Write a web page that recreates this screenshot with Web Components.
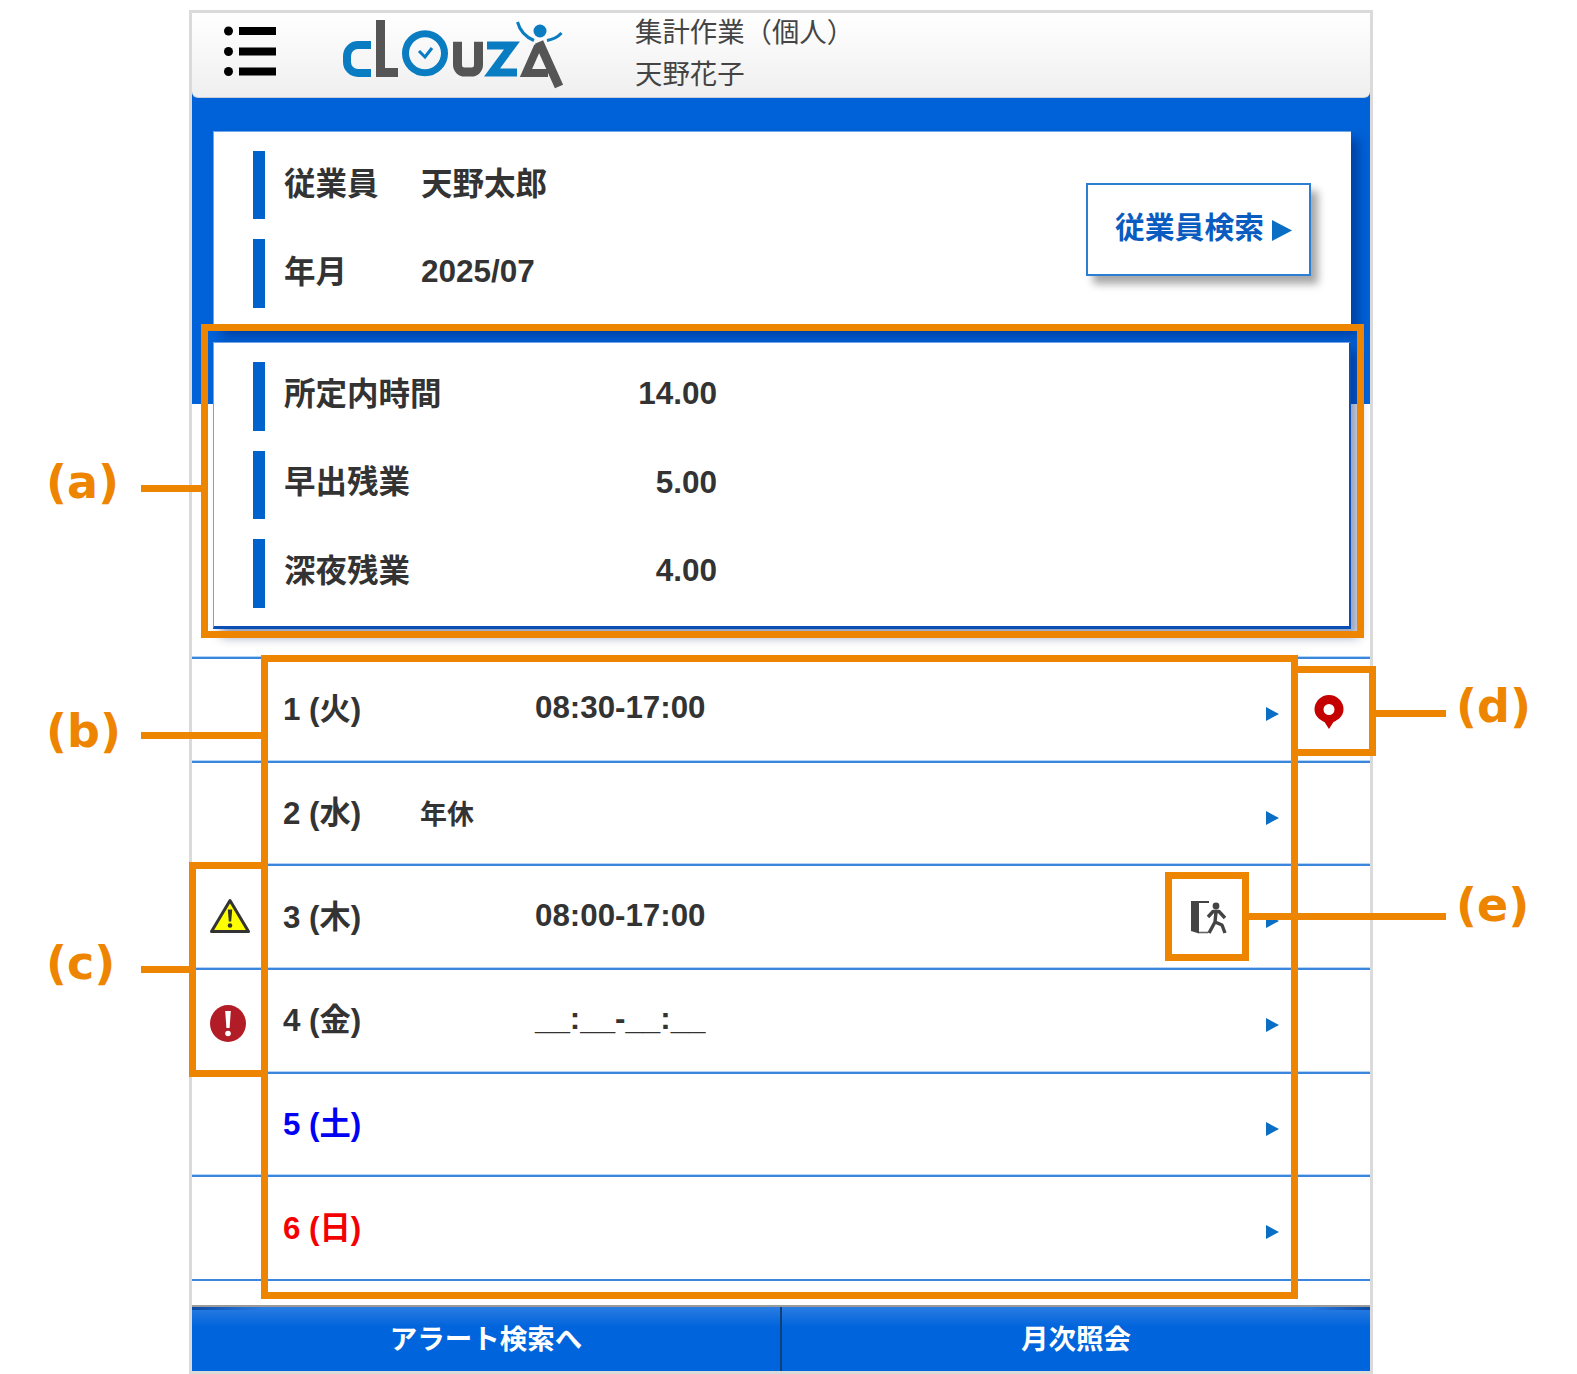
<!DOCTYPE html>
<html lang="ja">
<head>
<meta charset="utf-8">
<title>cLOUZA</title>
<style>
    html, body { margin: 0; background: #fff; }
    body { font-family: "Liberation Sans", "Noto Sans CJK JP", sans-serif; color: #333; }
</style>
</head>
<body>

<clz-page>
    <clz-frame>
        <clz-header slot="header" title-line="集計作業（個人）" name-line="天野花子"></clz-header>

        <clz-summary>
            <clz-card>
                <div>
                    <clz-field label="従業員" cjk>天野太郎</clz-field>
                    <clz-field label="年月">2025/07</clz-field>
                </div>
                <clz-search-button slot="aside">従業員検索</clz-search-button>
            </clz-card>
            <clz-card>
                <div>
                    <clz-field label="所定内時間" numeric>14.00</clz-field>
                    <clz-field label="早出残業" numeric>5.00</clz-field>
                    <clz-field label="深夜残業" numeric>4.00</clz-field>
                </div>
            </clz-card>
        </clz-summary>

        <clz-days>
            <clz-day>
                1 (火)
                <span slot="time">08:30-17:00</span>
                <clz-icon slot="pin" name="pin"></clz-icon>
            </clz-day>
            <clz-day>
                2 (水)
                <span slot="note">年休</span>
            </clz-day>
            <clz-day>
                3 (木)
                <clz-icon slot="alert" name="warn"></clz-icon>
                <span slot="time">08:00-17:00</span>
                <clz-icon slot="exit" name="exit"></clz-icon>
            </clz-day>
            <clz-day>
                4 (金)
                <clz-icon slot="alert" name="error"></clz-icon>
                <span slot="time">__:__-__:__</span>
            </clz-day>
            <clz-day tone="sat">5 (土)</clz-day>
            <clz-day tone="sun">6 (日)</clz-day>
        </clz-days>

        <clz-footer>
            <span>アラート検索へ</span>
            <span slot="right">月次照会</span>
        </clz-footer>
    </clz-frame>

    <!-- callouts lie over the screenshot -->
    <clz-mark slot="marks" style="left:201px;top:324px;width:1163px;height:314px"></clz-mark>
    <clz-mark slot="marks" style="left:261px;top:655px;width:1037px;height:644px"></clz-mark>
    <clz-mark slot="marks" style="left:189px;top:862px;width:79px;height:215px"></clz-mark>
    <clz-mark slot="marks" style="left:1291px;top:666px;width:85px;height:90px"></clz-mark>
    <clz-mark slot="marks" style="left:1165px;top:872px;width:84px;height:89px"></clz-mark>

    <clz-mark slot="marks" line style="left:141px;top:485px;width:60px"></clz-mark>
    <clz-mark slot="marks" line style="left:141px;top:732px;width:120px"></clz-mark>
    <clz-mark slot="marks" line style="left:141px;top:966px;width:48px"></clz-mark>
    <clz-mark slot="marks" line style="left:1376px;top:710px;width:70px"></clz-mark>
    <clz-mark slot="marks" line style="left:1249px;top:913px;width:197px"></clz-mark>

    <clz-mark slot="marks" label style="left:46px;top:456px">(a)</clz-mark>
    <clz-mark slot="marks" label style="left:46px;top:705px">(b)</clz-mark>
    <clz-mark slot="marks" label style="left:46px;top:937px">(c)</clz-mark>
    <clz-mark slot="marks" label style="left:1456px;top:680px">(d)</clz-mark>
    <clz-mark slot="marks" label style="left:1456px;top:879px">(e)</clz-mark>
</clz-page>

<script>
const FONT = `"Liberation Sans", "Noto Sans CJK JP", sans-serif`;
const BLUE = "#0062d8";

// every element below just fills its shadow root once
class ClzBase extends HTMLElement {
    constructor() {
        super();
        this.attachShadow({mode: 'open'});
    }

    connectedCallback() {
        this.render();
    }

    get styles() { return ""; }
    get template() { return "<slot></slot>"; }

    render() {
        this.shadowRoot.innerHTML = `<style>${this.styles}</style>${this.template}`;
    }
}

class ClzPage extends ClzBase {
    get styles() {
        return `
            :host {
                display: block;
                position: relative;
                width: 1577px;
                height: 1374px;
                padding: 10px 0 0 189px;
                box-sizing: border-box;
                overflow: hidden;
                font-family: ${FONT};
            }
        `;
    }
    get template() {
        return `<slot></slot><slot name="marks"></slot>`;
    }
}

class ClzFrame extends ClzBase {
    get styles() {
        return `
            :host {
                display: flex;
                flex-direction: column;
                width: 1184px;
                height: 1364px;
                box-sizing: border-box;
                border: solid #dadada;
                border-width: 3px;
                background: #fff;
            }
            .head { background: ${BLUE}; }
            .rest { flex: 1; display: flex; flex-direction: column; min-height: 0; }
        `;
    }
    get template() {
        return `
            <div class="head"><slot name="header"></slot></div>
            <div class="rest"><slot></slot></div>
        `;
    }
}

class ClzHeader extends ClzBase {
    get styles() {
        return `
            :host {
                display: flex;
                align-items: flex-start;
                height: 85px;
                box-sizing: border-box;
                padding-left: 30px;
                background: linear-gradient(#fff, #efefef);
                border-radius: 0 0 6px 6px;
                border-bottom: 1px solid #c9ced6;
            }
            .menu { margin-top: 12px; display: block; }
            .logo { margin-left: 64px; margin-top: 5px; display: block; }
            .title {
                margin-left: 69px;
                margin-top: -1px;
                font-size: 27.4px;
                line-height: 42px;
                color: #444;
                white-space: nowrap;
            }
        `;
    }
    get template() {
        return `
            <svg class="menu" width="54" height="60" viewBox="0 0 54 60">
                <g fill="#000">
                    <circle cx="6.5" cy="6" r="4.5"/><rect x="17" y="2" width="37" height="8"/>
                    <circle cx="6.5" cy="26.5" r="4.5"/><rect x="17" y="22.5" width="37" height="8"/>
                    <circle cx="6.5" cy="46.5" r="4.5"/><rect x="17" y="42.5" width="37" height="8"/>
                </g>
            </svg>
            <svg class="logo" width="226" height="72" viewBox="340 18 226 72" role="img" aria-label="cLOUZA">
                <g fill="none" stroke-linejoin="miter">
                    <path d="M371 45H358a11 11 0 0 0-11 11v6a11 11 0 0 0 11 11H371" stroke="#0a7cc2" stroke-width="8"/>
                    <path d="M380.5 20V72.5H398" stroke="#555" stroke-width="9"/>
                    <circle cx="425" cy="53.3" r="19.5" stroke="#0a7cc2" stroke-width="7"/>
                    <path d="M419 51l6 6 7-9" stroke="#0a7cc2" stroke-width="3"/>
                    <path d="M457.5 41.7V65a7 7 0 0 0 7 7h7a7 7 0 0 0 7-7V41.7" stroke="#555" stroke-width="9"/>
                    <path d="M487 45.5H512L492 72.5H517" stroke="#0a7cc2" stroke-width="8"/>
                    <path d="M538 46L526 73H548" stroke="#555" stroke-width="8"/>
                    <path d="M539 42L559 86.5" stroke="#555" stroke-width="9"/>
                    <path d="M517.5 22Q521 35 534 40.5" stroke="#0a7cc2" stroke-width="3"/>
                    <path d="M561.5 33Q556 39 547 40.5" stroke="#0a7cc2" stroke-width="3"/>
                </g>
                <circle cx="540" cy="31" r="6.5" fill="#0a7cc2"/>
            </svg>
            <div class="title">
                <div>${this.getAttribute("title-line")}</div>
                <div>${this.getAttribute("name-line")}</div>
            </div>
        `;
    }
}

class ClzSummary extends ClzBase {
    get styles() {
        return `
            :host {
                display: flex;
                flex-direction: column;
                gap: 13.5px;
                padding: 32.7px 19.5px 28.3px 20.5px;
                background: linear-gradient(${BLUE} 306px, #fff 306px);
            }
        `;
    }
}

class ClzCard extends ClzBase {
    get styles() {
        return `
            :host {
                display: flex;
                align-items: center;
                justify-content: space-between;
                padding: 19px 39.5px 18px 39px;
                background: #fff;
                border: 1px solid #6fa6ea;
                border-width: 1px 0 3px 1px;
                border-bottom-color: #0a4fb4;
                box-sizing: border-box;
                box-shadow: 8px 8px 10px rgba(0, 20, 90, .4);
            }
            :host(:last-child) { border-right: 2px solid #0a4fb4; }
        `;
    }
    get template() {
        return `<slot></slot><slot name="aside"></slot>`;
    }
}

class ClzField extends ClzBase {
    get styles() {
        return `
            :host {
                display: flex;
                align-items: center;
                height: 68.5px;
                border-left: 12.5px solid #0062cc;
                padding-left: 19.5px;
                box-sizing: border-box;
                font-size: 31.5px;
                font-weight: bold;
                color: #333;
                white-space: nowrap;
            }
            :host(:not(:last-child)) { margin-bottom: 20px; }
            .label { width: 137px; padding-bottom: 8px; }
            .val { padding-bottom: 4px; }
            :host([cjk]) .val { padding-bottom: 8px; }
            :host([numeric]) .label { padding-bottom: 11px; }
            :host([numeric]) .val { width: 296px; text-align: right; padding-bottom: 5px; }
        `;
    }
    get template() {
        return `<span class="label">${this.getAttribute("label")}</span><span class="val"><slot></slot></span>`;
    }
}

class ClzSearchButton extends ClzBase {
    get styles() {
        return `
            :host {
                display: flex;
                align-items: center;
                justify-content: center;
                gap: 8px;
                width: 225px;
                height: 93px;
                box-sizing: border-box;
                border: 2px solid #2a7fd4;
                background: #fff;
                box-shadow: 7px 8px 8px rgba(0, 0, 0, .35);
                color: #0a5cc0;
                font-size: 29.8px;
                font-weight: bold;
                white-space: nowrap;
                padding: 0 0 9px 10px;
            }
            svg { display: block; margin-top: 11px; }
        `;
    }
    get template() {
        return `
            <slot></slot>
            <svg width="20" height="21" viewBox="0 0 20 21"><path d="M0 0L20 10.5 0 21Z" fill="#0a6fc4"/></svg>
        `;
    }
}

class ClzDays extends ClzBase {
    get styles() {
        return `
            :host {
                display: flex;
                flex-direction: column;
                flex: none;
            }
        `;
    }
}

class ClzDay extends ClzBase {
    get styles() {
        return `
            :host {
                display: flex;
                align-items: center;
                height: 103.7px;
                box-sizing: border-box;
                border-top: 2px solid #3a86dc;
                box-shadow: 0 -1px 0 #b5d3f4;
                font-size: 31.3px;
                font-weight: bold;
                color: #333;
                white-space: nowrap;
            }
            :host(:last-child) {
                height: 105.7px;
                border-bottom: 2px solid #3a86dc;
            }
            :host([tone="sat"]) { color: #0000f5; }
            :host([tone="sun"]) { color: #f50000; }
            .alert { width: 91px; padding-left: 17.6px; box-sizing: border-box; display: flex; }
            .date { width: 137px; padding-bottom: 6px; }
            .note { width: 115px; font-size: 27px; padding-bottom: 3px; }
            .time { flex: 1; padding-bottom: 3px; }
            .exit { margin-right: 38px; display: flex; padding-top: 3px; }
            .arrow { display: block; margin-top: 8px; }
            .pin { width: 91px; padding: 5px 0 0 35px; box-sizing: border-box; display: flex; }
            ::slotted(clz-icon[name="error"]) { margin-top: 5px; }
            ::slotted(clz-icon[name="warn"]) { margin-top: -2px; }
        `;
    }
    get template() {
        return `
            <div class="alert"><slot name="alert"></slot></div>
            <div class="date"><slot></slot></div>
            <div class="note"><slot name="note"></slot></div>
            <div class="time"><slot name="time"></slot></div>
            <div class="exit"><slot name="exit"></slot></div>
            <svg class="arrow" width="13" height="14" viewBox="0 0 13 14"><path d="M0 0L13 7 0 14Z" fill="#0a6fc4"/></svg>
            <div class="pin"><slot name="pin"></slot></div>
        `;
    }
}

const ICONS = {
    warn: `<svg width="40" height="36" viewBox="0 0 40 36">
        <path d="M20 2.5L38.5 33.5H1.5Z" fill="#ffff00" stroke="#333" stroke-width="3" stroke-linejoin="round"/>
        <path d="M17.8 11.5h4.4l-1 12h-2.4Z" fill="#333"/><circle cx="20" cy="27.5" r="2.3" fill="#333"/>
    </svg>`,
    error: `<svg width="36" height="37" viewBox="0 0 36 37">
        <ellipse cx="18" cy="18.5" rx="18" ry="18.5" fill="#b21c26"/>
        <path d="M15.2 6h5.6l-1.2 17h-3.2Z" fill="#fff"/><circle cx="18" cy="28.5" r="2.8" fill="#fff"/>
    </svg>`,
    pin: `<svg width="30" height="34" viewBox="0 0 30 34">
        <path fill-rule="evenodd" fill="#c40000" d="M15 0A14.5 14.5 0 0 1 29.5 14.5C29.5 21 24 25 19.5 27L15 34 10.5 27C6 25 .5 21 .5 14.5A14.5 14.5 0 0 1 15 0ZM15 9a5.5 5.5 0 1 0 0 11 5.5 5.5 0 0 0 0-11Z"/>
    </svg>`,
    exit: `<svg width="37" height="36" viewBox="0 0 37 36">
        <path d="M0 0H18V2H8V32.5L0 30Z" fill="#444"/>
        <path d="M8 31.5H17" stroke="#666" stroke-width="1.6"/>
        <circle cx="25" cy="5" r="3.4" fill="#444"/>
        <path d="M17 16L22 10.5H28L34 17M25 11L24 21 18 32M24 21L31 24 34 32" fill="none" stroke="#444" stroke-width="3.4" stroke-linejoin="round"/>
    </svg>`
};

class ClzIcon extends ClzBase {
    get styles() {
        return `:host { display: block; line-height: 0; } svg { display: block; }`;
    }
    get template() {
        return ICONS[this.getAttribute("name")];
    }
}

class ClzFooter extends ClzBase {
    get styles() {
        return `
            :host {
                display: flex;
                height: 66px;
                margin-top: auto;
                flex: none;
                border-top: 2px solid #9a9a9a;
                box-sizing: border-box;
                background: linear-gradient(90deg, #0a4ba6, transparent 70px, transparent calc(100% - 60px), #0a4ba6) top / 100% 3px no-repeat,
                    linear-gradient(#2a7ce2, #0064dc 20px);
                color: #fff;
                font-size: 27.5px;
                font-weight: bold;
            }
            div {
                flex: 1;
                display: flex;
                align-items: center;
                justify-content: center;
                padding-bottom: 5px;
            }
            div + div { border-left: 2px solid #123f78; }
        `;
    }
    get template() {
        return `<div><slot></slot></div><div><slot name="right"></slot></div>`;
    }
}

class ClzMark extends ClzBase {
    get styles() {
        return `
            :host {
                position: absolute;
                display: block;
                box-sizing: border-box;
                border: 7px solid #ee8500;
            }
            :host([line]) { border-width: 7px 0 0; height: 7px; }
            :host([label]) {
                border: 0;
                color: #ee8500;
                font: bold 46px/1.15 "DejaVu Sans", sans-serif;
                white-space: nowrap;
            }
        `;
    }
}

customElements.define('clz-page', ClzPage);
customElements.define('clz-frame', ClzFrame);
customElements.define('clz-header', ClzHeader);
customElements.define('clz-summary', ClzSummary);
customElements.define('clz-card', ClzCard);
customElements.define('clz-field', ClzField);
customElements.define('clz-search-button', ClzSearchButton);
customElements.define('clz-days', ClzDays);
customElements.define('clz-day', ClzDay);
customElements.define('clz-icon', ClzIcon);
customElements.define('clz-footer', ClzFooter);
customElements.define('clz-mark', ClzMark);
</script>
</body>
</html>
